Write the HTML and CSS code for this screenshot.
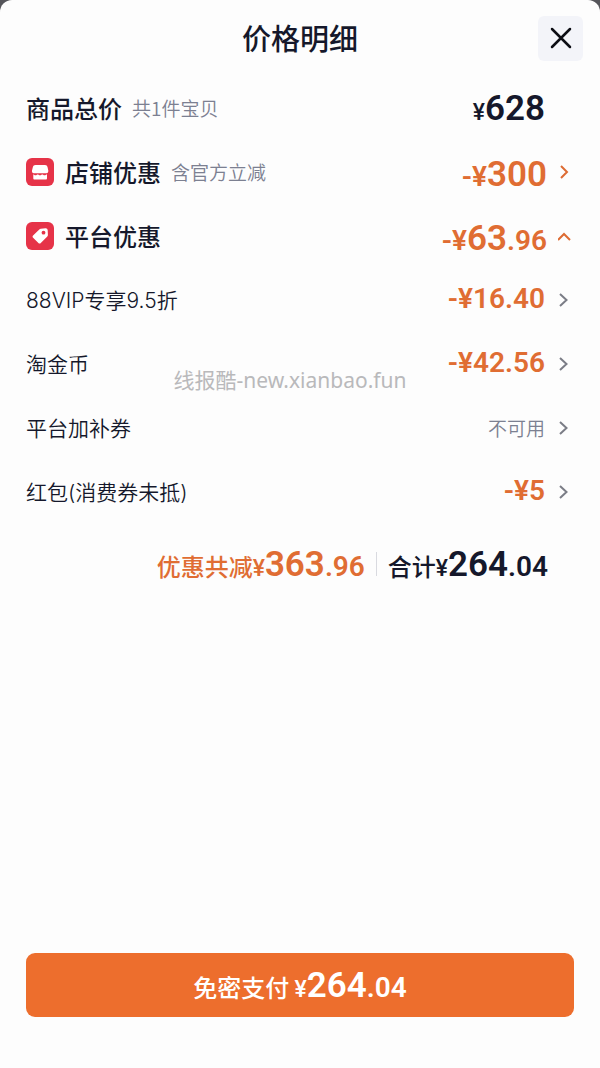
FILE: index.html
```html
<!DOCTYPE html>
<html lang="zh">
<head>
    <meta charset="UTF-8">
    <meta name="viewport" content="width=device-width, initial-scale=1.0">
    <title>价格明细</title>
    <link rel="stylesheet" href="styles.css">
</head>
<body>

<main class="sheet">
    <header class="sheet-header">
        <h1>价格明细</h1>
        <button class="close-btn" type="button" aria-label="关闭">
            <svg width="22" height="22" viewBox="0 0 22 22"><path d="M2 2 20 20M20 2 2 20"/></svg>
        </button>
    </header>

    <!-- 明细列表 -->
    <ul class="price-list">
        <li class="row">
            <span class="label">商品总价</span>
            <span class="note">共1件宝贝</span>
            <span class="amount dark"><span class="yen">¥</span><span class="big">628</span></span>
            <span class="arrow"></span>
        </li>
        <li>
            <button class="row" type="button">
                <svg class="badge" width="28" height="28" viewBox="0 0 28 28">
                    <rect width="28" height="28" rx="6" fill="#e63348"/>
                    <path d="M9.500 7h9.500c1.500 0 2.200.7 2.500 2l.8 3.500c.2 1.600-.6 2.500-1.800 2.800H7.800c-1.300-.3-2.100-1.200-1.800-2.800L6.900 9C7.200 7.700 8 7 9.500 7z" fill="#fff"/>
                    <path d="M7.300 16.500c.9 0 1.300.8 2.200.8s1.300-.8 2.200-.8 1.300.8 2.300.8 1.400-.8 2.300-.8 1.300.8 2.200.8 1.400-.8 2.500-.8v3.800c0 .8-.4 1.200-1.200 1.200H8.500c-.8 0-1.200-.4-1.200-1.200z" fill="#fff"/>
                </svg>
                <span class="label">店铺优惠</span>
                <span class="note">含官方立减</span>
                <span class="amount main"><span class="sign">-¥</span><span class="big">300</span></span>
                <svg class="arrow orange" width="16" height="16" viewBox="0 0 16 16"><path d="M3 2 9 8 3 14"/></svg>
            </button>
        </li>
        <li>
            <button class="row" type="button" aria-expanded="true">
                <svg class="badge" width="28" height="28" viewBox="0 0 28 28">
                    <rect width="28" height="28" rx="6" fill="#e63348"/>
                    <path d="M14.800 6.800 19.500 6.300c1.200-.1 2.100.7 2.200 1.900l.2 4.800c0 .6-.2 1.100-.6 1.500l-6.500 6.400c-.7.7-1.700.7-2.400 0l-5.300-5.100c-.7-.7-.7-1.600 0-2.300l6.200-6.100c.4-.4.900-.6 1.500-.6z" fill="#fff"/>
                    <circle cx="17.500" cy="10.700" r="1.900" fill="#e63348"/>
                </svg>
                <span class="label">平台优惠</span>
                <span class="amount main"><span class="sign">-¥</span><span class="big">63</span><span class="cents">.96</span></span>
                <svg class="arrow orange" width="16" height="16" viewBox="0 0 16 16"><path d="M0 12 6 6 12 12"/></svg>
            </button>
        </li>
        <li>
            <button class="row" type="button">
                <span class="item">88VIP专享9.5折</span>
                <span class="amount small">-¥16.40</span>
                <svg class="arrow" width="16" height="16" viewBox="0 0 16 16"><path d="M2 2 8.500 8 2 14"/></svg>
            </button>
        </li>
        <li>
            <button class="row" type="button">
                <span class="item">淘金币</span>
                <span class="amount small">-¥42.56</span>
                <svg class="arrow" width="16" height="16" viewBox="0 0 16 16"><path d="M2 2 8.500 8 2 14"/></svg>
            </button>
        </li>
        <li>
            <button class="row" type="button">
                <span class="item">平台加补券</span>
                <span class="disabled">不可用</span>
                <svg class="arrow" width="16" height="16" viewBox="0 0 16 16"><path d="M2 2 8.500 8 2 14"/></svg>
            </button>
        </li>
        <li>
            <button class="row" type="button">
                <span class="item">红包(消费券未抵)</span>
                <span class="amount small">-¥5</span>
                <svg class="arrow" width="16" height="16" viewBox="0 0 16 16"><path d="M2 2 8.500 8 2 14"/></svg>
            </button>
        </li>
    </ul>

    <!-- 合计 -->
    <div class="total">
        <p class="saved">优惠共减<span class="yen">¥</span><span class="big">363</span><span class="cents">.96</span></p>
        <p class="sum">合计<span class="yen">¥</span><span class="big">264</span><span class="cents">.04</span></p>
    </div>

    <footer class="sheet-footer">
        <button class="pay-btn" type="button">免密支付 <span class="yen">¥</span><span class="big">264</span><span class="cents">.04</span></button>
    </footer>

    <div class="watermark">线报酷-new.xianbao.fun</div>
</main>

</body>
</html>
```

FILE: styles.css
```css
* { box-sizing: border-box; margin: 0; padding: 0; }
body {
    background: #55555a;
    color: #15182b;
    font-family: "Noto Sans CJK SC", sans-serif;
}
button {
    border: none;
    background: none;
    color: inherit;
    font-family: inherit;
    cursor: pointer;
}

/* 弹层 */
.sheet {
    position: relative;
    display: flex;
    flex-direction: column;
    min-height: 100vh;
    background: #fdfdfd;
    border-radius: 12px 12px 0 0;
}
.sheet-header {
    display: grid;
    grid-template-columns: 1fr auto 1fr;
    align-items: center;
    height: 76px;
    padding: 0 17px;
}
.sheet-header h1 {
    grid-column: 2;
    padding-bottom: 2px;
    font-size: 29px;
    font-weight: 500;
}
.close-btn {
    display: flex;
    align-items: center;
    justify-content: center;
    justify-self: end;
    width: 45px;
    height: 45px;
    border-radius: 6px;
    background: #f3f4f9;
}
.close-btn path {
    fill: none;
    stroke: #0c0d14;
    stroke-width: 2.5;
    stroke-linecap: round;
}

/* 明细列表 */
.price-list {
    list-style: none;
    padding: 0 26px;
}
.row {
    display: flex;
    align-items: center;
    width: 100%;
    height: 64px;
}
.badge {
    margin-right: 11px;
}
.label, .note, .item, .disabled {
    padding-bottom: 2px;
}
.label {
    font-size: 24px;
    font-weight: 500;
}
.note {
    margin-left: 10px;
}
.note, .disabled {
    font-size: 19px;
    font-weight: 350;
    color: #7c8091;
}
.item {
    font-family: Inter, "Noto Sans CJK SC", sans-serif;
    font-size: 21px;
    font-weight: 350;
}
.disabled {
    margin-left: auto;
}
.arrow {
    width: 16px;
    margin-left: 13px;
    fill: none;
    stroke: #7b7d86;
    stroke-width: 2;
}
.arrow.orange {
    margin-left: 11px;
    stroke: #dd6b33;
}

/* 金额 */
.amount {
    margin-left: auto;
    color: #e06d33;
    font-family: Roboto, sans-serif;
    font-weight: 600;
}
.amount.dark {
    color: #15182b;
}
.amount.main {
    padding-top: 5px;
}
.amount.small {
    padding-bottom: 4px;
    font-size: 28px;
}
.big, .cents, .yen, .sign {
    font-family: Roboto, sans-serif;
    font-weight: 600;
}
.big {
    font-size: 35px;
}
.cents, .sign {
    font-size: 28px;
}
.yen {
    font-size: 23px;
    font-weight: 500;
}

/* 合计 */
.total {
    display: flex;
    align-items: center;
    justify-content: flex-end;
    height: 80px;
    padding-right: 52px;
    font-size: 24px;
    font-weight: 500;
}
.saved {
    color: #e06d33;
}
.sum {
    display: flex;
    align-items: baseline;
}
.sum::before {
    content: "";
    align-self: center;
    width: 1px;
    height: 24px;
    margin: 0 11px;
    background: #d9dae0;
}

/* 底部支付按钮 */
.sheet-footer {
    margin-top: auto;
    padding: 0 26px 51px;
}
.pay-btn {
    width: 100%;
    height: 64px;
    border-radius: 9px;
    background: #ed6e2d;
    color: #fff;
    font-size: 24px;
    font-weight: 500;
}

/* 水印 */
.watermark {
    position: absolute;
    top: 366px;
    left: 0;
    right: 0;
    padding-right: 20px;
    text-align: center;
    font-family: "Noto Sans", "Noto Sans CJK SC", sans-serif;
    font-size: 21px;
    line-height: 28px;
    color: #b9b9bb;
    pointer-events: none;
}
```
